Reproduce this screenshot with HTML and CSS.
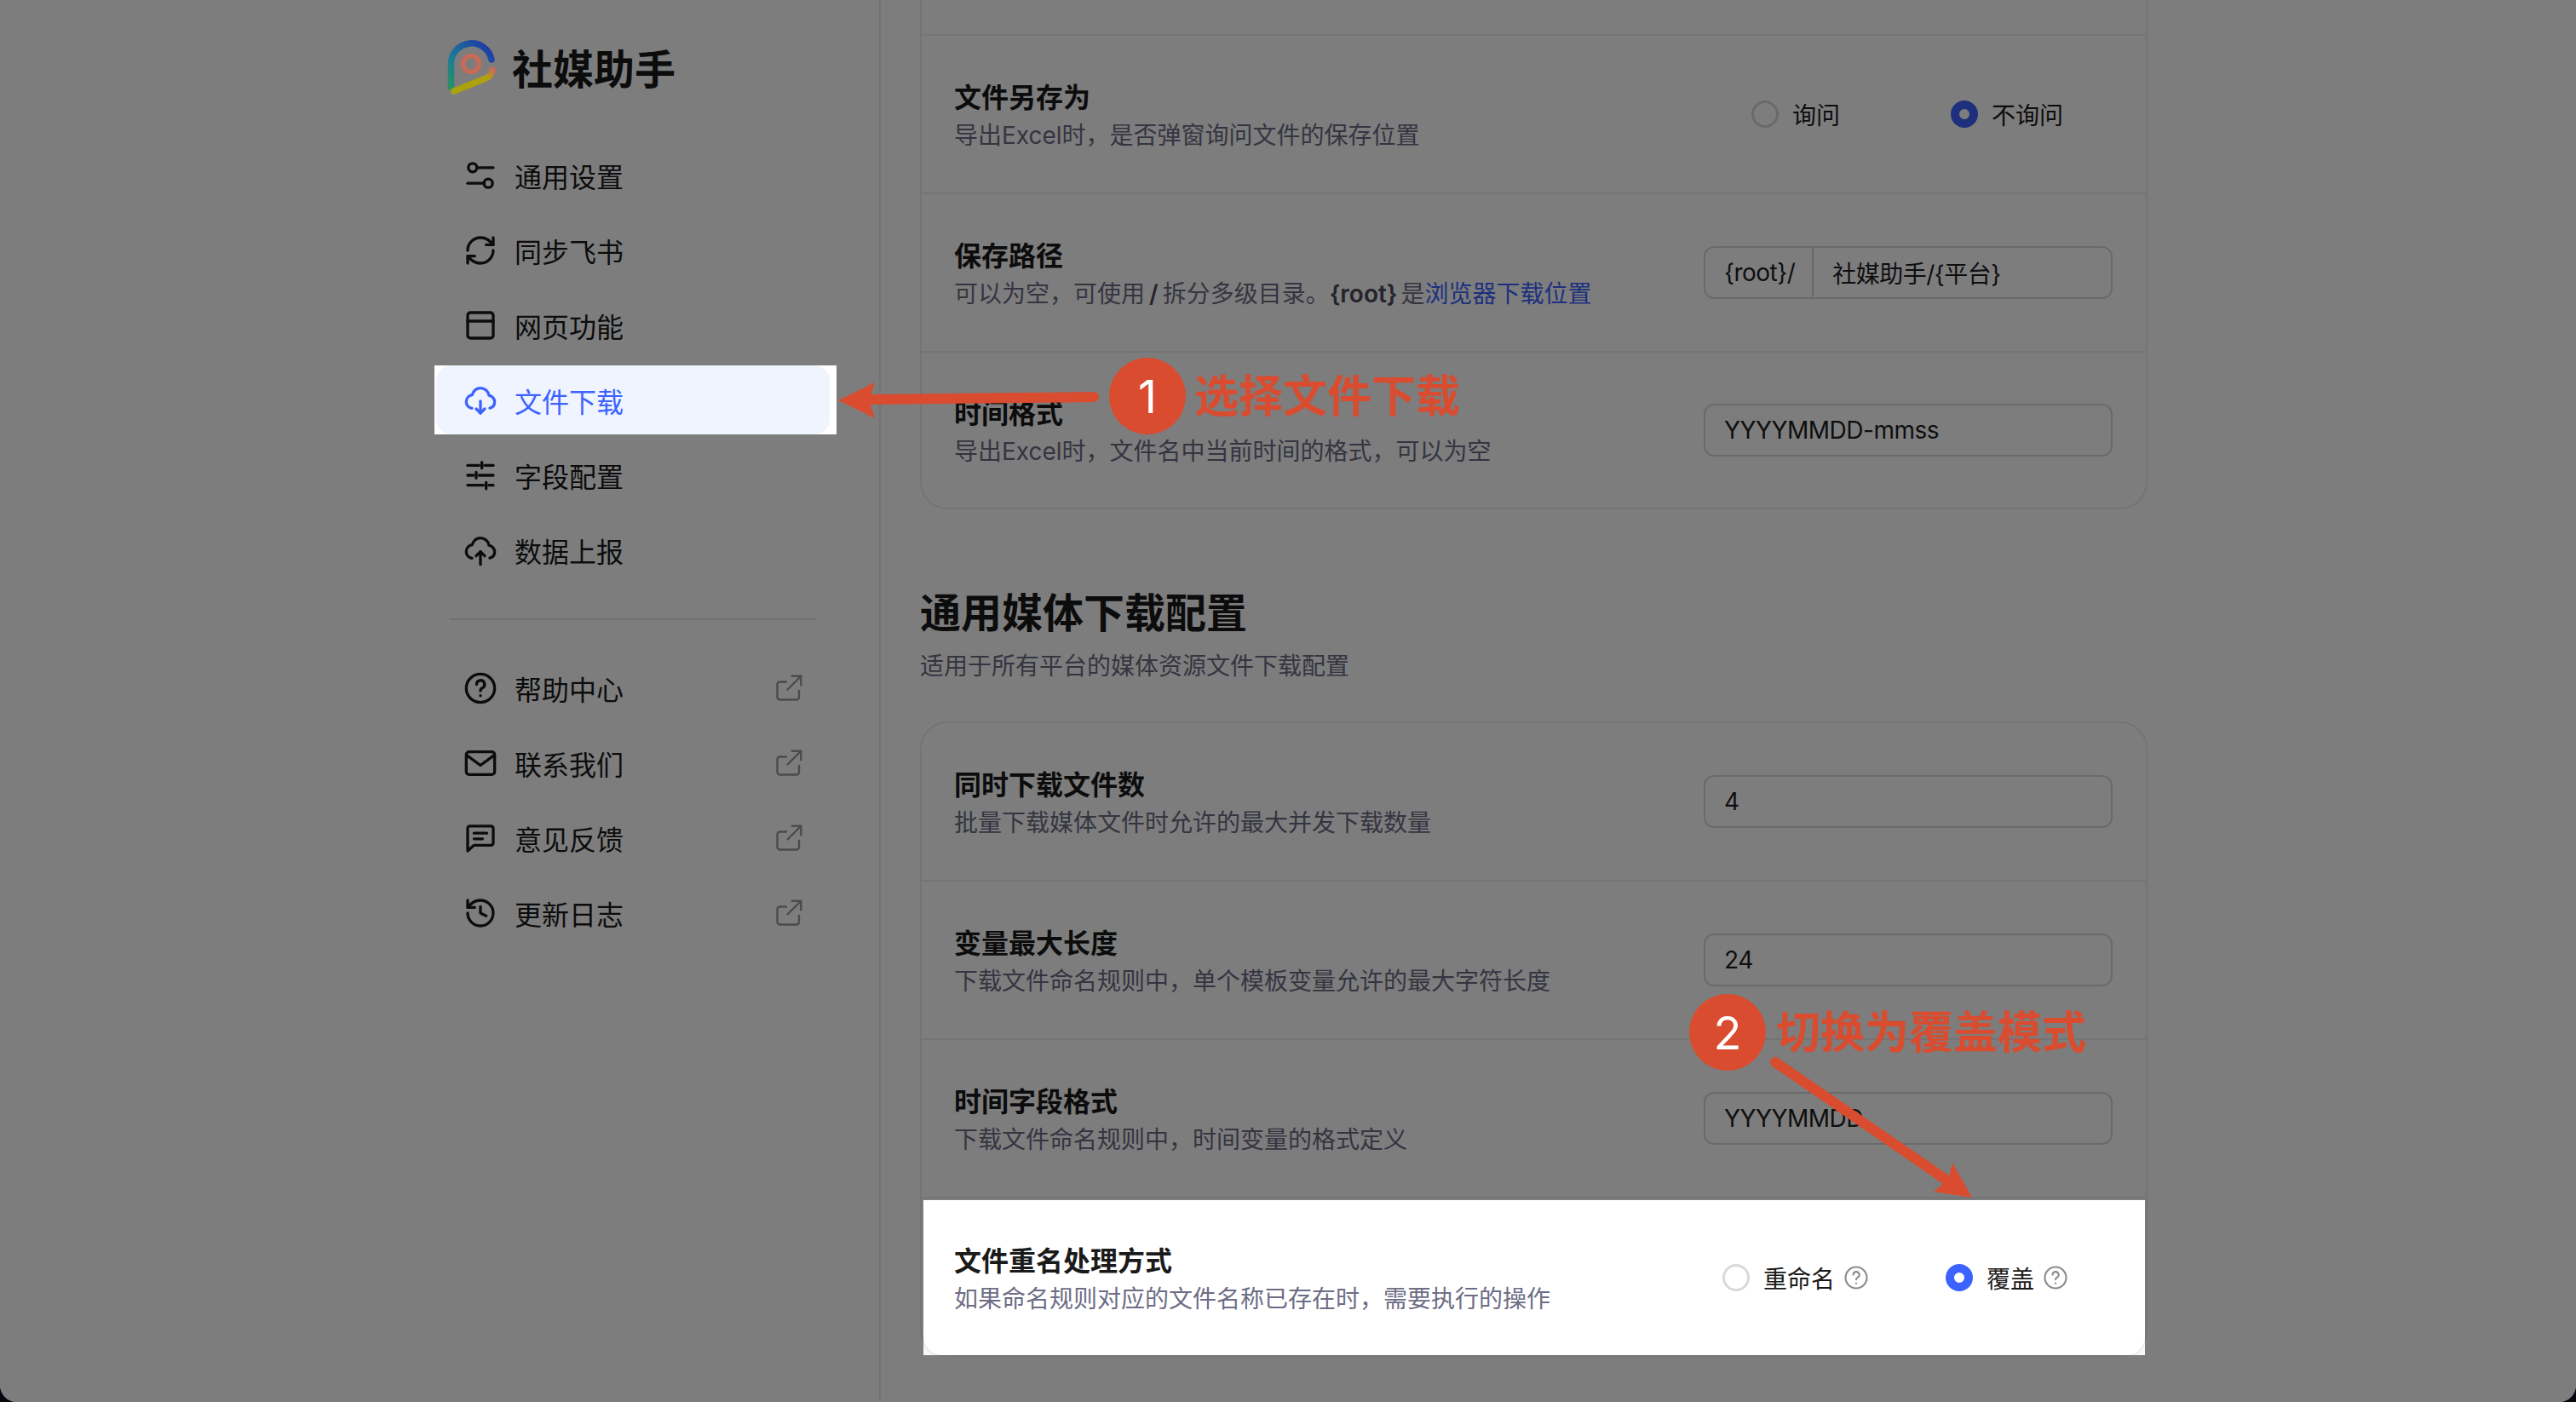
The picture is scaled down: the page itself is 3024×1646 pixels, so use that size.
FILE: index.html
```html
<!DOCTYPE html>
<html lang="zh-CN">
<head>
<meta charset="utf-8">
<title>社媒助手</title>
<link rel="stylesheet" href="styles.css">
</head>
<body>
<div class="app">

  <aside class="sidebar">
    <div class="brand">
      <svg class="logo" viewBox="0 0 60 70" fill="none" stroke-linecap="round">
        <defs>
          <linearGradient id="logoArc" x1="0" y1="1" x2="1" y2="0">
            <stop offset="0" stop-color="#2a9068"/>
            <stop offset="0.35" stop-color="#1c7a98"/>
            <stop offset="1" stop-color="#1e34a8"/>
          </linearGradient>
          <linearGradient id="logoTail" x1="0" y1="1" x2="1" y2="0">
            <stop offset="0" stop-color="#a8a40c"/>
            <stop offset="0.75" stop-color="#b0a010"/>
            <stop offset="1" stop-color="#c86c58"/>
          </linearGradient>
        </defs>
        <path d="M53 25A24 24 0 0 0 5.500 29.500V57" stroke="url(#logoArc)" stroke-width="7.500"/>
        <path d="M9 62L45 47.500C51 45 54 42 54 37" stroke="url(#logoTail)" stroke-width="7.500"/>
        <circle cx="29" cy="30" r="9.500" stroke="#c56b5a" stroke-width="5.500"/>
      </svg>
      <span class="brand-name">社媒助手</span>
    </div>

    <nav class="nav">
      <a class="nav-item">
        <svg class="nav-icon" viewBox="0 0 24 24"><circle cx="6.500" cy="6.500" r="3"/><path d="M9.500 6.500H21"/><path d="M3 17.500h11.500"/><circle cx="17.500" cy="17.500" r="3"/></svg>
        <span>通用设置</span>
      </a>
      <a class="nav-item">
        <svg class="nav-icon" viewBox="0 0 24 24"><path d="M3 12a9 9 0 0 1 9-9 9.750 9.750 0 0 1 6.740 2.740L21 8"/><path d="M21 3v5h-5"/><path d="M21 12a9 9 0 0 1-9 9 9.750 9.750 0 0 1-6.740-2.740L3 16"/><path d="M8 16H3v5"/></svg>
        <span>同步飞书</span>
      </a>
      <a class="nav-item">
        <svg class="nav-icon" viewBox="0 0 24 24"><rect x="3" y="3" width="18" height="18" rx="2"/><path d="M3 9h18"/></svg>
        <span>网页功能</span>
      </a>
      <div class="nav-spot">
        <a class="nav-item active">
          <svg class="nav-icon" viewBox="0 0 24 24"><path d="M6 17.600C3.600 17.200 2 15.300 2 13c0-2.500 1.800-4.500 4.200-4.900C7.200 5.100 9.400 3.400 12 3.400c3 0 5.500 2.200 6 5.100 2.200.4 4 2.400 4 4.700 0 2.100-1.400 3.800-3.400 4.300"/><path d="M12 12.500v8.500"/><path d="M9 18l3 3 3-3"/></svg>
          <span>文件下载</span>
        </a>
      </div>
      <a class="nav-item">
        <svg class="nav-icon" viewBox="0 0 24 24"><path d="M3 5h8"/><path d="M15 5h6"/><path d="M13 2.800V7"/><path d="M3 12h4"/><path d="M11 12h10"/><path d="M9 9.800V14"/><path d="M3 19h11"/><path d="M18 19h3"/><path d="M16 17v4.500"/></svg>
        <span>字段配置</span>
      </a>
      <a class="nav-item">
        <svg class="nav-icon" viewBox="0 0 24 24"><path d="M6 17.600C3.600 17.200 2 15.300 2 13c0-2.500 1.800-4.500 4.200-4.900C7.200 5.100 9.400 3.400 12 3.400c3 0 5.500 2.200 6 5.100 2.200.4 4 2.400 4 4.700 0 2.100-1.400 3.800-3.400 4.300"/><path d="M12 13v9"/><path d="M9 16l3-3 3 3"/></svg>
        <span>数据上报</span>
      </a>
    </nav>

    <div class="nav-line"></div>

    <nav class="nav">
      <a class="nav-item">
        <svg class="nav-icon" viewBox="0 0 24 24"><circle cx="12" cy="12" r="10"/><path d="M9.300 9.300a2.800 2.800 0 1 1 4.200 2.400c-.9.500-1.500 1-1.500 2.100"/><path d="M12 17.200v.1"/></svg>
        <span>帮助中心</span>
        <svg class="ext-icon" viewBox="0 0 24 24"><path d="M20 14v5a2 2 0 0 1-2 2H5a2 2 0 0 1-2-2V9a2 2 0 0 1 2-2h5"/><path d="M11 13L21.500 2.500"/><path d="M14.500 2.500h7v7"/></svg>
      </a>
      <a class="nav-item">
        <svg class="nav-icon" viewBox="0 0 24 24"><rect x="2" y="4" width="20" height="16" rx="2"/><path d="M2.500 6.500L12 13.500l9.500-7"/></svg>
        <span>联系我们</span>
        <svg class="ext-icon" viewBox="0 0 24 24"><path d="M20 14v5a2 2 0 0 1-2 2H5a2 2 0 0 1-2-2V9a2 2 0 0 1 2-2h5"/><path d="M11 13L21.500 2.500"/><path d="M14.500 2.500h7v7"/></svg>
      </a>
      <a class="nav-item">
        <svg class="nav-icon" viewBox="0 0 24 24"><path d="M3 5a1.500 1.500 0 0 1 1.500-1.500h15A1.500 1.500 0 0 1 21 5v10.500a1.500 1.500 0 0 1-1.500 1.500H7.500L3 21z"/><path d="M7.500 8.500h9"/><path d="M7.500 12.500h6"/></svg>
        <span>意见反馈</span>
        <svg class="ext-icon" viewBox="0 0 24 24"><path d="M20 14v5a2 2 0 0 1-2 2H5a2 2 0 0 1-2-2V9a2 2 0 0 1 2-2h5"/><path d="M11 13L21.500 2.500"/><path d="M14.500 2.500h7v7"/></svg>
      </a>
      <a class="nav-item">
        <svg class="nav-icon" viewBox="0 0 24 24"><path d="M3 12a9 9 0 1 0 9-9 9.750 9.750 0 0 0-6.740 2.740L3 8"/><path d="M3 3v5h5"/><path d="M12 7.500V12l4 2"/></svg>
        <span>更新日志</span>
        <svg class="ext-icon" viewBox="0 0 24 24"><path d="M20 14v5a2 2 0 0 1-2 2H5a2 2 0 0 1-2-2V9a2 2 0 0 1 2-2h5"/><path d="M11 13L21.500 2.500"/><path d="M14.500 2.500h7v7"/></svg>
      </a>
    </nav>
  </aside>

  <main class="main">
    <div class="card card-cut">
      <div class="row row-cut"></div>
      <div class="row">
        <div class="row-text">
          <div class="row-title">文件另存为</div>
          <div class="row-desc">导出Excel时，是否弹窗询问文件的保存位置</div>
        </div>
        <div class="radios radios-ask">
          <label class="radio"><i class="dot"></i>询问</label>
          <label class="radio"><i class="dot on"></i>不询问</label>
        </div>
      </div>
      <div class="row">
        <div class="row-text">
          <div class="row-title">保存路径</div>
          <div class="row-desc">可以为空，可使用<b class="slash">/</b>拆分多级目录。<b>{root}</b><span class="is">是</span><a class="link">浏览器下载位置</a></div>
        </div>
        <div class="field field-path">
          <span class="addon">{root}/</span>
          <span class="field-val">社媒助手/{平台}</span>
        </div>
      </div>
      <div class="row row-last">
        <div class="row-text">
          <div class="row-title">时间格式</div>
          <div class="row-desc">导出Excel时，文件名中当前时间的格式，可以为空</div>
        </div>
        <div class="field"><span class="field-val">YYYYMMDD-mmss</span></div>
      </div>
    </div>

    <h2 class="section-title">通用媒体下载配置</h2>
    <p class="section-desc">适用于所有平台的媒体资源文件下载配置</p>

    <div class="card">
      <div class="row">
        <div class="row-text">
          <div class="row-title">同时下载文件数</div>
          <div class="row-desc">批量下载媒体文件时允许的最大并发下载数量</div>
        </div>
        <div class="field"><span class="field-val">4</span></div>
      </div>
      <div class="row">
        <div class="row-text">
          <div class="row-title">变量最大长度</div>
          <div class="row-desc">下载文件命名规则中，单个模板变量允许的最大字符长度</div>
        </div>
        <div class="field"><span class="field-val">24</span></div>
      </div>
      <div class="row">
        <div class="row-text">
          <div class="row-title">时间字段格式</div>
          <div class="row-desc">下载文件命名规则中，时间变量的格式定义</div>
        </div>
        <div class="field"><span class="field-val">YYYYMMDD</span></div>
      </div>
      <div class="row row-last row-spot">
        <div class="row-text">
          <div class="row-title">文件重名处理方式</div>
          <div class="row-desc">如果命名规则对应的文件名称已存在时，需要执行的操作</div>
        </div>
        <div class="radios radios-mode">
          <label class="radio"><i class="dot"></i>重命名<svg class="tip-icon" viewBox="0 0 24 24"><circle cx="12" cy="12" r="10"/><path d="M9.300 9.300a2.800 2.800 0 1 1 4.200 2.400c-.9.500-1.500 1-1.500 2.100"/><path d="M12 17.200v.1"/></svg></label>
          <label class="radio"><i class="dot on"></i>覆盖<svg class="tip-icon" viewBox="0 0 24 24"><circle cx="12" cy="12" r="10"/><path d="M9.300 9.300a2.800 2.800 0 1 1 4.200 2.400c-.9.500-1.500 1-1.500 2.100"/><path d="M12 17.200v.1"/></svg></label>
        </div>
      </div>
    </div>
  </main>

  <div class="shade"></div>

  <!-- annotations on top of the screenshot -->
  <svg class="arrows" viewBox="0 0 3024 1646">
    <path class="arrow-line" d="M1010 469L1284 466"/>
    <path class="arrow-head" d="M984 470L1027 449L1020 470L1027 491z"/>
    <path class="arrow-line" d="M2084 1247L2283 1384"/>
    <path class="arrow-head" d="M2315 1406L2270 1399L2287 1385L2292 1365z"/>
  </svg>
  <div class="mark mark-one"><span class="mark-num">1</span><span class="mark-text">选择文件下载</span></div>
  <div class="mark mark-two"><span class="mark-num">2</span><span class="mark-text">切换为覆盖模式</span></div>
</div>
</body>
</html>
```

FILE: styles.css
```css
* {
  box-sizing: border-box;
}

html, body {
  margin: 0;
  height: 100%;
}

body {
  background: #05080d;
  color: #1a1a1a;
  font-family: "Inter", "Noto Sans CJK SC", sans-serif;
  overflow: hidden;
}

.app {
  position: relative;
  display: flex;
  width: 3024px;
  height: 1646px;
  background: #fff;
  border-radius: 0 0 20px 20px;
  overflow: hidden;
}

/* sidebar */
.sidebar {
  flex: none;
  width: 1034px;
  padding-left: 512px;
  border-right: 2px solid #ececec;
}

.brand {
  display: flex;
  align-items: center;
  gap: 17px;
  height: 72px;
  margin: 42px 0 51px 12px;
}

.logo {
  position: relative;
  z-index: 3;
  width: 60px;
  height: 70px;
  margin-top: 3px;
}

.brand-name {
  font-size: 48px;
  font-weight: 700;
}

.nav {
  display: flex;
  flex-direction: column;
  gap: 7px;
  width: 462px;
}

.nav-item {
  display: flex;
  align-items: center;
  gap: 20px;
  height: 81px;
  padding: 0 30px 0 32px;
  border-radius: 18px;
  font-size: 32px;
}

.nav-spot {
  position: relative;
  z-index: 3;
  margin: 0 -8px 0 -2px;
  padding: 0 8px 0 2px;
  background: #fff;
}

.nav-item.active {
  background: #f0f4ff;
  color: #3d63ff;
}

.nav-icon {
  flex: none;
  width: 40px;
  height: 40px;
  fill: none;
  stroke: currentColor;
  stroke-width: 2;
  stroke-linecap: round;
  stroke-linejoin: round;
}

.ext-icon {
  flex: none;
  width: 36px;
  height: 36px;
  margin-left: auto;
  fill: none;
  stroke: #999;
  stroke-width: 1.600;
  stroke-linecap: round;
  stroke-linejoin: round;
}

.nav-line {
  width: 430px;
  height: 2px;
  margin: 40px 0 39px 16px;
  background: #e6e6e6;
}

/* settings */
.main {
  flex: none;
  width: 1441px;
  margin-left: 46px;
}

.card {
  border: 2px solid #ececec;
  border-radius: 32px;
}

.card-cut {
  border-top: 0;
  border-radius: 0 0 32px 32px;
}

.row {
  display: flex;
  align-items: center;
  justify-content: space-between;
  height: 186px;
  padding: 0 39px 0 38px;
  border-bottom: 2px solid #ececec;
}

.row-cut {
  height: 42px;
}

.row-last {
  border-bottom: 0;
  height: 182px;
}

.row-spot {
  position: relative;
  z-index: 3;
  height: 182px;
  margin: 2px 1px 0 2px;
  padding: 0 38px 0 36px;
  background: #f8f8f8;
  overflow: hidden;
}

/* the card's rounded corner still shows inside the highlight */
.row-spot::before {
  content: "";
  position: absolute;
  inset: 0 -2px -2px;
  z-index: -1;
  background: #fff;
  border: 2px solid #ececec;
  border-top: 0;
  border-radius: 0 0 24px 24px;
}

.row-text {
  padding-top: 4px;
}

.row-title {
  font-size: 32px;
  font-weight: 600;
  line-height: 44px;
}

.row-desc {
  margin-top: 1px;
  font-size: 28px;
  line-height: 42px;
  color: #6d6d85;
}

.row-desc b {
  color: #4a4a5c;
  font-weight: 600;
}

.row-desc .slash {
  margin: 0 5px;
}

.row-desc .is {
  margin-left: 4px;
}

.link {
  color: #3d63ff;
}

.field {
  display: flex;
  align-items: center;
  width: 480px;
  height: 62px;
  border: 2px solid #d9d9d9;
  border-radius: 12px;
  font-size: 28px;
  letter-spacing: -.5px;
  color: #1d1d1f;
}

.field-val {
  padding-left: 22px;
}

.addon {
  display: flex;
  align-items: center;
  height: 100%;
  padding: 0 20px 0 22px;
  border-right: 2px solid #d9d9d9;
}

.radios {
  display: flex;
  width: 480px;
}

.radios-ask {
  padding-left: 56px;
  gap: 130px;
}

.radios-mode {
  padding-left: 22px;
  gap: 90px;
}

.radio {
  display: flex;
  align-items: center;
  gap: 16px;
  font-size: 28px;
}

.dot {
  flex: none;
  width: 32px;
  height: 32px;
  border: 3px solid #d9d9d9;
  border-radius: 50%;
  background: #fff;
}

.dot.on {
  border: 10px solid #3d63ff;
}

.tip-icon {
  width: 30px;
  height: 30px;
  margin-left: -6px;
  fill: none;
  stroke: #8c8c8c;
  stroke-width: 1.700;
  stroke-linecap: round;
}

.section-title {
  margin: 89px 0 9px;
  font-size: 48px;
  font-weight: 700;
  line-height: 66px;
}

.section-desc {
  margin: 0 0 45px;
  font-size: 28px;
  line-height: 40px;
  color: #6d6d85;
}

/* dim layer and guide marks */
.shade {
  position: absolute;
  inset: 0;
  z-index: 2;
  background: rgba(0, 0, 0, .51);
}

.arrows {
  position: absolute;
  inset: 0;
  z-index: 4;
  width: 3024px;
  height: 1646px;
}

.arrow-line {
  fill: none;
  stroke: #d94c2f;
  stroke-width: 12;
  stroke-linecap: round;
}

.arrow-head {
  fill: #d94c2f;
}

.mark {
  position: absolute;
  z-index: 5;
  display: flex;
  align-items: center;
  gap: 10px;
}

.mark-one {
  left: 1302px;
  top: 420px;
}

.mark-two {
  left: 1983px;
  top: 1167px;
  gap: 12px;
}

.mark-num {
  display: flex;
  align-items: center;
  justify-content: center;
  width: 90px;
  height: 90px;
  border-radius: 50%;
  background: #d94c2f;
  color: #fff;
  font-size: 54px;
}

.mark-text {
  margin-top: -8px;
  font-size: 52px;
  font-weight: 700;
  color: #d94c2f;
}
```
